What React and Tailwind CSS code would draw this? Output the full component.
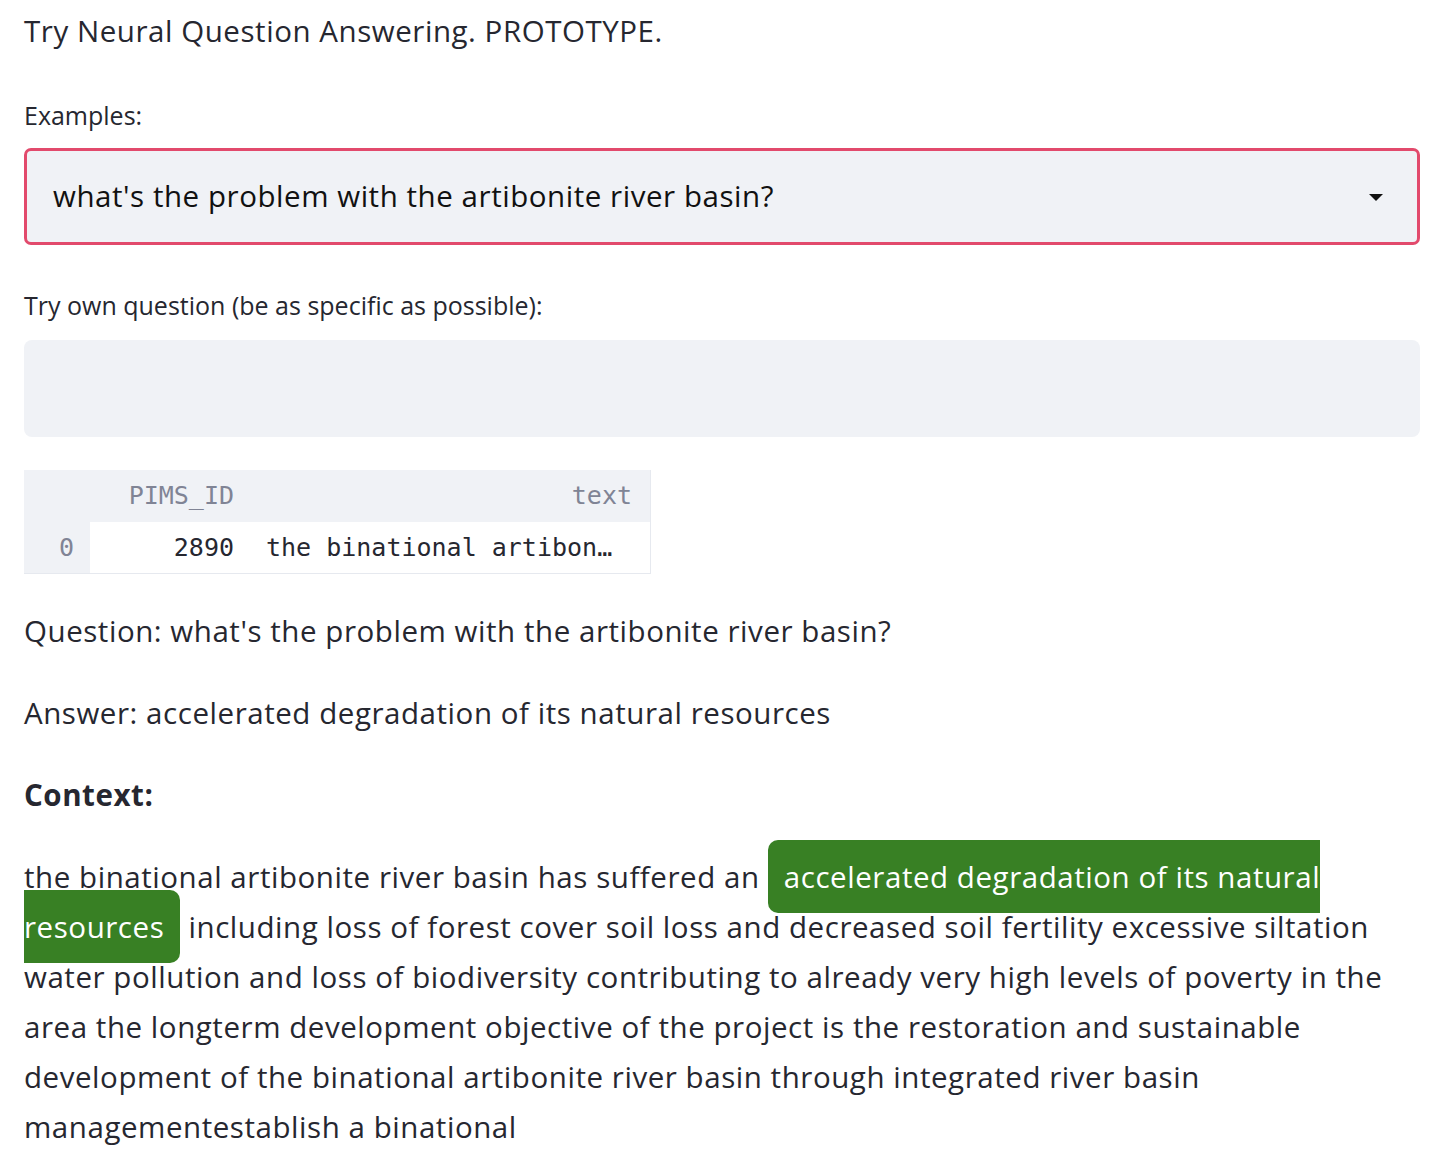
import React from "react";

const sans = { fontFamily: "'Open Sans', 'Noto Sans', sans-serif" };

export default function App() {
  return (
    <div className="w-[1456px] h-[1158px] bg-white text-[#262730] overflow-hidden" style={sans}>
      <div className="pl-[24px] pr-[36px] flex flex-col">
        <div className="mt-[9px] h-[44px] leading-[44px] text-[29.5px] tracking-[0.55px]">
          Try Neural Question Answering. PROTOTYPE.
        </div>
        <div className="mt-[47px] h-[30px] leading-[30px] text-[25px]">Examples:</div>
        <div className="mt-[18px] h-[97px] rounded-[7px] border-[3px] border-[#e24a6c] bg-[#f0f2f6] flex items-center pl-[26px] pr-[34px]">
          <span className="flex-1 text-[29.5px] tracking-[0.55px] text-[#111]">what's the problem with the artibonite river basin?</span>
          <svg width="14" height="8" viewBox="0 0 14 8" className="mt-[2px]">
            <polygon points="0,0 14,0 7,7" fill="#111" />
          </svg>
        </div>
        <div className="mt-[45px] h-[30px] leading-[30px] text-[25px]">
          Try own question (be as specific as possible):
        </div>
        <div className="mt-[20px] h-[97px] rounded-[8px] bg-[#f0f2f6]"></div>
        <div
          className="mt-[33px] w-[627px] border-r border-b border-[#e6e9ef]"
          style={{ fontFamily: "'DejaVu Sans Mono', 'Liberation Mono', monospace" }}
        >
          <div className="flex h-[52px] bg-[#f0f2f6] text-[#808495] text-[25px] items-center">
            <div className="w-[66px]"></div>
            <div className="w-[160px] text-right pr-[16px]">PIMS_ID</div>
            <div className="flex-1 text-right pr-[18px]">text</div>
          </div>
          <div className="flex h-[51px] text-[25px] items-center">
            <div className="w-[66px] h-full bg-[#f0f2f6] text-[#808495] flex items-center justify-end pr-[16px]">0</div>
            <div className="w-[160px] h-full flex items-center justify-end pr-[16px]">2890</div>
            <div className="flex-1 h-full flex items-center pl-[16px] whitespace-nowrap">the binational artibon…</div>
          </div>
        </div>
        <div className="mt-[32px] h-[50px] leading-[50px] text-[29.5px] tracking-[0.55px]">
          Question: what's the problem with the artibonite river basin?
        </div>
        <div className="mt-[32px] h-[50px] leading-[50px] text-[29.5px] tracking-[0.55px]">
          Answer: accelerated degradation of its natural resources
        </div>
        <div className="mt-[32px] h-[50px] leading-[50px] text-[29.5px] tracking-[0.55px] font-bold">Context:</div>
        <p className="mt-[32px] leading-[50px] text-[29.5px] tracking-[0.55px] w-[1396px]">
          the binational artibonite river basin has suffered an{" "}
          <span className="bg-[#388024] text-white rounded-[10px] px-[16px] py-[16px]">
            accelerated degradation of its natural resources
          </span>{" "}
          including loss of forest cover soil loss and decreased soil fertility excessive siltation water pollution and loss of biodiversity contributing to already very high levels of poverty in the area the longterm development objective of the project is the restoration and sustainable development of the binational artibonite river basin through integrated river basin managementestablish a binational
        </p>
      </div>
    </div>
  );
}
